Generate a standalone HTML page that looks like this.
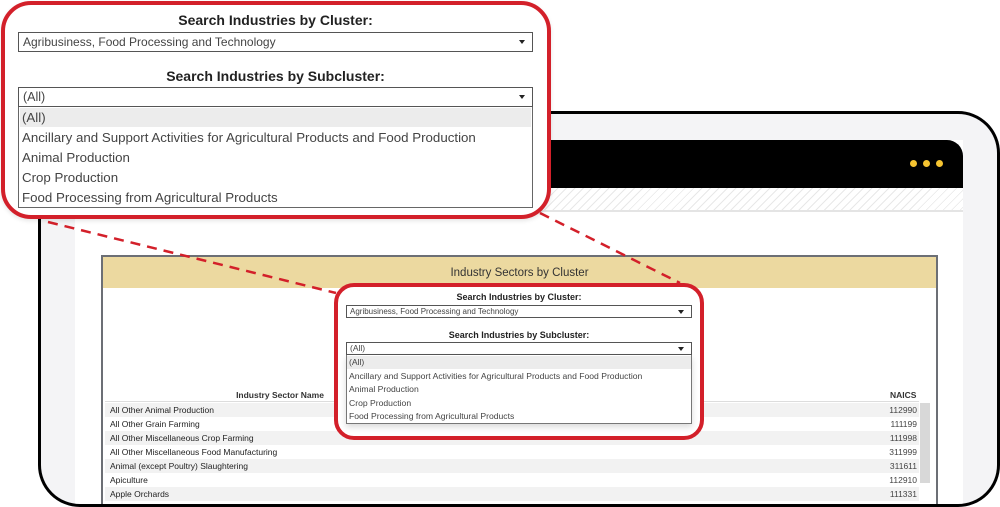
<!DOCTYPE html>
<html><head><meta charset="utf-8"><style>
*{margin:0;padding:0;box-sizing:border-box}
body{width:1000px;height:507px;overflow:hidden;background:#fff;font-family:"Liberation Sans",sans-serif;position:relative;color:#333}
.a{position:absolute}
.frameb{left:38px;top:111px;width:962px;height:396px;border-radius:42px;background:#f4f4f6}
.framel{left:38px;top:111px;width:962px;height:396px;border:3px solid #000;border-radius:42px;z-index:5}
.screen{left:75px;top:140px;width:888px;height:367px;background:#fff}
.hdr{left:75px;top:140px;width:888px;height:48px;background:#000;border-top-right-radius:16px}
.hatch{left:75px;top:188px;width:888px;height:24px;background:repeating-linear-gradient(135deg,#fff 0 5px,#e8e8e8 5px 6px);border-bottom:2px solid #e4e4e4}
.dot{width:7px;height:7px;border-radius:50%;background:#f5c431;top:160px}
.tbl{left:101px;top:255px;width:837px;height:250px;border:2px solid #6c6f75;border-bottom:none;background:#fff}
.gold{left:103px;top:257px;width:833px;height:31px;background:#ecd9a0;text-align:center;font-size:11.5px;line-height:32px;color:#333}
.row{left:105px;width:814px;height:14px;font-size:8.5px;line-height:14px;padding-left:5px;color:#222}
.row span{position:absolute;right:2px;color:#444}
.pop{background:#fff;border:4px solid #d3202a}
.t{text-align:center;font-weight:bold;color:#222;white-space:nowrap}
.sel{border:1px solid #555;background:#fff;color:#444;white-space:nowrap}
.sel:after{content:"";position:absolute;right:7px;top:50%;border-left:3px solid transparent;border-right:3px solid transparent;border-top:4px solid #222;margin-top:-2px}
.it{white-space:nowrap;color:#444}
</style></head><body>
<div class="a frameb"></div>
<div class="a screen"></div>
<div class="a hdr"></div>
<div class="a dot" style="left:910px"></div>
<div class="a dot" style="left:923px"></div>
<div class="a dot" style="left:936px"></div>
<div class="a hatch"></div>
<div class="a tbl"></div>
<div class="a gold">Industry Sectors by Cluster</div>
<div class="a" style="left:180px;top:390px;width:200px;text-align:center;font-size:8.5px;font-weight:bold">Industry Sector Name</div>
<div class="a" style="left:890px;top:390px;font-size:8.5px;font-weight:bold">NAICS</div>
<div class="a" style="left:105px;top:401px;width:814px;height:1px;background:#ddd"></div>
<div class="a" style="left:920px;top:403px;width:10px;height:80px;background:#d8d8d8"></div>
<div class="a row" style="top:403px;background:#f2f2f2">All Other Animal Production<span>112990</span></div>
<div class="a row" style="top:417px">All Other Grain Farming<span>111199</span></div>
<div class="a row" style="top:431px;background:#f2f2f2">All Other Miscellaneous Crop Farming<span>111998</span></div>
<div class="a row" style="top:445px">All Other Miscellaneous Food Manufacturing<span>311999</span></div>
<div class="a row" style="top:459px;background:#f2f2f2">Animal (except Poultry) Slaughtering<span>311611</span></div>
<div class="a row" style="top:473px">Apiculture<span>112910</span></div>
<div class="a row" style="top:487px;background:#f2f2f2">Apple Orchards<span>111331</span></div>
<div class="a framel"></div>

<svg class="a" style="left:0;top:0;z-index:6" width="1000" height="507"><g stroke="#d3202a" stroke-width="2.5" stroke-dasharray="10,7" fill="none"><line x1="48" y1="222" x2="336" y2="293"/><line x1="540" y1="213" x2="680" y2="283"/></g></svg>

<div style="position:absolute;left:0;top:0;z-index:7">
<div class="a pop" style="left:334px;top:283px;width:370px;height:157px;border-radius:20px"></div>
<div class="a t" style="left:346px;top:292px;width:346px;font-size:9px">Search Industries by Cluster:</div>
<div class="a sel" style="left:346px;top:305px;width:346px;height:13px;font-size:8px;line-height:11px;padding-left:3px">Agribusiness, Food Processing and Technology</div>
<div class="a t" style="left:346px;top:330px;width:346px;font-size:9px">Search Industries by Subcluster:</div>
<div class="a sel" style="left:346px;top:342px;width:346px;height:13px;font-size:8.5px;line-height:11px;padding-left:3px">(All)</div>
<div class="a" style="left:346px;top:355px;width:346px;height:69px;border:1px solid #777;border-top:none;background:#fff;box-shadow:0 3px 6px rgba(0,0,0,.15)"></div>
<div class="a" style="left:347px;top:356px;width:344px;height:13px;background:#ececec"></div>
<div class="a it" style="left:349px;top:356px;font-size:8.6px;line-height:13.5px">(All)<br>Ancillary and Support Activities for Agricultural Products and Food Production<br>Animal Production<br>Crop Production<br>Food Processing from Agricultural Products</div>

<div class="a pop" style="left:1px;top:1px;width:550px;height:218px;border-radius:30px;box-shadow:0 2px 4px rgba(0,0,0,.1)"></div>
<div class="a t" style="left:18px;top:12px;width:515px;font-size:14px">Search Industries by Cluster:</div>
<div class="a sel" style="left:18px;top:32px;width:515px;height:20px;font-size:12px;line-height:19px;padding-left:4px">Agribusiness, Food Processing and Technology</div>
<div class="a t" style="left:18px;top:68px;width:515px;font-size:14px">Search Industries by Subcluster:</div>
<div class="a sel" style="left:18px;top:87px;width:515px;height:20px;font-size:12.5px;line-height:19px;padding-left:4px">(All)</div>
<div class="a" style="left:18px;top:107px;width:515px;height:101px;border:1px solid #666;border-top:none;background:#fff"></div>
<div class="a" style="left:20px;top:108px;width:511px;height:19px;background:#ececec"></div>
<div class="a it" style="left:22px;top:108px;font-size:13.3px;line-height:20px">(All)<br>Ancillary and Support Activities for Agricultural Products and Food Production<br>Animal Production<br>Crop Production<br>Food Processing from Agricultural Products</div>
</div>
</body></html>
